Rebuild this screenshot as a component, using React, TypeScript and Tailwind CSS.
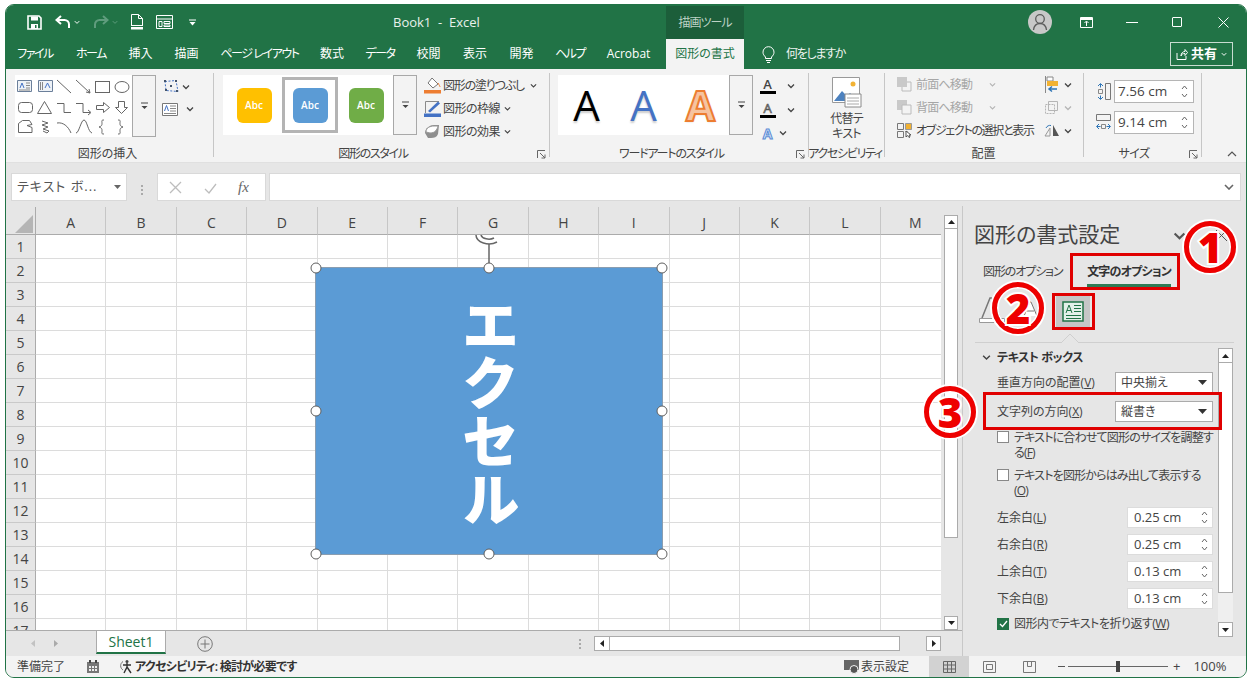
import React from "react";

const Chev = ({ c = "#444", w = 8 }: { c?: string; w?: number }) => (
  <svg width={w} height={w * 0.75} viewBox="0 0 8 6" className="shrink-0"><path d="M1 1.5 4 4.5 7 1.5" fill="none" stroke={c} strokeWidth="1.3" /></svg>
);
const Launcher = () => (
  <svg width="9" height="9" viewBox="0 0 9 9" className="shrink-0"><path d="M.5 8V.5H8M3 3l5 5M8 4.5V8H4.5" fill="none" stroke="#666" /></svg>
);
const MoreBtn = ({ h }: { h: string }) => (
  <div className={`${h} w-[24px] border border-[#a8a8a8] bg-[#f3f3f3] flex items-center justify-center shrink-0`}>
    <svg width="9" height="8" viewBox="0 0 9 8"><path d="M1 1h7" stroke="#444" /><path d="M1.5 4h6L4.5 7z" fill="#444" /></svg>
  </div>
);
const Caret = () => (
  <svg width="9" height="5" viewBox="0 0 9 5" className="shrink-0"><path d="M0 0h9L4.5 5z" fill="#333" /></svg>
);
const Spin = () => (
  <svg width="7" height="15" viewBox="0 0 7 15" className="shrink-0"><path d="M1 5l2.5-3L6 5M1 10l2.5 3L6 10" fill="none" stroke="#666" /></svg>
);

const Group = ({ w, label, labelCls = "", children, right, sep = true }: { w: string; label: string; labelCls?: string; children: React.ReactNode; right?: React.ReactNode; sep?: boolean }) => (
  <div className={`${w} shrink-0 h-full flex flex-col relative`}>
    <div className="flex-1 min-h-0 flex">{children}</div>
    <div className={`h-[18px] shrink-0 flex items-center justify-center text-[12px] text-[#444] leading-none pt-[1px] whitespace-nowrap ${labelCls}`}>{label}</div>
    {right && <div className="absolute right-[4px] bottom-[3px] flex">{right}</div>}
    {sep && <div className="absolute right-0 top-[4px] bottom-[5px] w-px bg-[#c6c6c6]" />}
  </div>
);

const Abc = ({ bg, sel }: { bg: string; sel?: boolean }) => (
  <div className={`w-[56px] h-[56px] shrink-0 flex items-center justify-center ${sel ? "border-[3px] border-[#b4b4b4]" : ""}`}>
    <div className={`${bg} w-[35px] h-[35px] rounded-[6px] flex items-center justify-center text-white text-[10px] font-semibold`}>Abc</div>
  </div>
);

const tabs: [string, string, string][] = [
  ["ファイル", "w-[58px]", "tracking-[-1.5px]"], ["ホーム", "w-[54px]", "tracking-[-1.5px]"], ["挿入", "w-[45px]", ""], ["描画", "w-[47px]", ""], ["ページ レイアウト", "w-[99px]", "tracking-[-1.4px]"],
  ["数式", "w-[46px]", ""], ["データ", "w-[50px]", "tracking-[-1.5px]"], ["校閲", "w-[47px]", ""], ["表示", "w-[46px]", ""], ["開発", "w-[47px]", ""], ["ヘルプ", "w-[50px]", "tracking-[-1.5px]"], ["Acrobat", "w-[67px]", ""],
];
const cols = "ABCDEFGHIJKLM".split("");
const rows = Array.from({ length: 17 }, (_, i) => i + 1);

const MenuRow = ({ icon, text, gray, chevGap = "ml-[4px]", textCls = "" }: { icon: React.ReactNode; text: string; gray?: boolean; chevGap?: string; textCls?: string }) => (
  <div className={`h-[23px] flex items-center text-[12px] whitespace-nowrap ${gray ? "text-[#a6a6a6]" : "text-[#444]"}`}>
    <span className="w-[19px] flex shrink-0">{icon}</span>
    <span className={textCls}>{text}</span>
    <span className={`${chevGap} flex`}><Chev c={gray ? "#b5b5b5" : "#444"} w={7} /></span>
  </div>
);

const Handle = ({ cls }: { cls: string }) => (
  <div className={`absolute ${cls} w-[11px] h-[11px] rounded-full bg-white border-[1.5px] border-[#5f5f5f] -translate-x-1/2 -translate-y-1/2`} />
);

const SelectRow = ({ label, k, val }: { label: string; k: string; val: string }) => (
  <div className="h-[29px] flex items-center pl-[34px] text-[12px] text-[#444]">
    <span className="w-[118px] whitespace-nowrap">{label}(<u>{k}</u>)</span>
    <div className="w-[98px] h-[21px] bg-white border border-[#ababab] flex items-center justify-between pl-[5px] pr-[5px]">
      <span>{val}</span><Caret />
    </div>
  </div>
);
const SpinRow = ({ label, k, val }: { label: string; k: string; val: string }) => (
  <div className="h-[27px] flex items-center pl-[34px] text-[12px] text-[#444]">
    <span className="w-[130px]">{label}(<u>{k}</u>)</span>
    <div className="w-[86px] h-[21px] bg-white border border-[#dcdcdc] flex items-center justify-between pl-[6px] pr-[4px] text-[13px]">
      <span>{val}</span><Spin />
    </div>
  </div>
);

const Circle = ({ n, cls }: { n: string; cls: string }) => (
  <div className={`absolute ${cls} w-[52px] h-[52px] rounded-full border-[5px] border-[#ee0000] shadow-[0_0_0_2px_white,inset_0_0_0_1.5px_white] flex items-center justify-center text-[42px] leading-none font-black text-[#ee0000] [-webkit-text-stroke:4px_white] [paint-order:stroke_fill]`}>{n}</div>
);
const RedBox = ({ cls }: { cls: string }) => <div className={`absolute ${cls} border-[3px] border-[#e00000]`} />;

export default function App() {
  return (
    <div className="relative w-[1252px] h-[684px] bg-white overflow-hidden pl-[5px] pt-[4px] [font-family:'Open_Sans','Noto_Sans_CJK_JP',sans-serif] [font-feature-settings:'palt'] text-[#444]">
      <div className="w-[1242px] h-[674px] rounded-[9px] border border-[#217346] overflow-hidden flex flex-col bg-[#e6e6e6]">
        {/* title bar */}
        <div className="h-[34px] shrink-0 bg-[#217346] flex items-center text-white relative">
          <div className="flex items-center pl-[21px] w-[380px] shrink-0 h-full">
            <svg width="15" height="15" viewBox="0 0 15 15" className="mr-[13px]"><path d="M1 1h11l2 2v11H1z" fill="none" stroke="#fff" strokeWidth="1.6" /><path d="M4 1.5h7v4H4zM4 9h7v5H4z" fill="#fff" /><path d="M8 10h1.5v3H8z" fill="#217346" /></svg>
            <svg width="16" height="14" viewBox="0 0 16 14"><path d="M6 1 1.5 5 6 9M2 5h7.5a4.5 4.5 0 0 1 4.5 4.5V13" fill="none" stroke="#fff" strokeWidth="2" /></svg>
            <span className="ml-[3px] mr-[13px] flex"><Chev c="#fff" w={6} /></span>
            <svg width="16" height="14" viewBox="0 0 16 14"><path d="M10 1l4.5 4L10 9M14 5H6.500A4.500 4.500 0 0 0 2 9.500V13" fill="none" stroke="#5f9c7d" strokeWidth="2" /></svg>
            <span className="ml-[3px] mr-[12px] flex"><Chev c="#5f9c7d" w={6} /></span>
            <svg width="14" height="16" viewBox="0 0 14 16" className="mr-[12px]"><path d="M1.500.5h7l4 4V11M1.500.5V11M8.500.5v4h4" fill="none" stroke="#fff" /><path d="M1 11.500h12" stroke="#fff" /><path d="M1 13h12v2.500H1z" fill="#fff" /></svg>
            <svg width="17" height="14" viewBox="0 0 17 14" className="mr-[16px]"><path d="M.5.500h16v13H.5zM.5 4h16M3 6.500h3v5H3zM8 6.500h6v2H8zM8 10h6v1.500H8z" fill="none" stroke="#fff" /></svg>
            <svg width="7" height="7" viewBox="0 0 7 7"><path d="M0 1h7" stroke="#fff" /><path d="M.5 3h6L3.500 6.500z" fill="#fff" /></svg>
          </div>
          <div className="text-[13px] text-[#e9f1ec] whitespace-pre pl-[7px] w-[280px] shrink-0 pt-[1px]">Book1  -  Excel</div>
          <div className="w-[78px] h-[33px] mt-[1px] bg-[#1c5e3a] flex items-center justify-center text-[12px] tracking-[-1px] text-[#bcd2c5] shrink-0">描画ツール</div>
          <div className="flex-1 flex items-center h-full pl-[284px]">
            <div className="w-[24px] h-[24px] rounded-full bg-[#c8c8c8] flex items-center justify-center mr-[28px]">
              <svg width="16" height="18" viewBox="0 0 16 18"><circle cx="8" cy="6" r="4.300" fill="none" stroke="#5c5c5c" strokeWidth="1.300" /><path d="M1.500 17c.5-4 3-6.500 6.500-6.500s6 2.500 6.500 6.500" fill="none" stroke="#5c5c5c" strokeWidth="1.300" /></svg>
            </div>
            <svg width="13" height="11" viewBox="0 0 13 11" className="mr-[33px]"><path d="M.5.500h12v10H.5z" fill="none" stroke="#fff" /><path d="M.5 2h12" stroke="#fff" strokeWidth="2" /><path d="M6.500 9V4.500M4.500 6l2-2 2 2" fill="none" stroke="#fff" /></svg>
            <div className="w-[12px] h-px bg-white mr-[34px]" />
            <div className="w-[10px] h-[10px] border border-white rounded-[1px] mr-[36px]" />
            <svg width="11" height="11" viewBox="0 0 11 11"><path d="M.5.5l10 10M10.500.5l-10 10" stroke="#fff" /></svg>
          </div>
        </div>
        {/* tabs */}
        <div className="h-[30px] shrink-0 bg-[#217346] flex items-center text-white text-[12px]">
          {tabs.map(([t, w, tr]) => (
            <div key={t} className={`${w} ${tr} text-center whitespace-nowrap`}>{t}</div>
          ))}
          <div className="ml-[4px] w-[78px] h-full bg-[#f3f3f3] text-[#217346] flex items-center justify-center">図形の書式</div>
          <svg width="13" height="17" viewBox="0 0 13 17" className="ml-[18px] mr-[11px]"><path d="M3.500 11C2 9.500 1 8.300 1 6.200A5.500 5.500 0 0 1 12 6.200c0 2.100-1 3.300-2.500 4.800v1.500h-6zM4 14.500h5M5 16.500h3" fill="none" stroke="#fff" /></svg>
          <div className="text-[#eef4f0] w-[59px] whitespace-nowrap tracking-[-1.3px]">何をしますか</div>
          <div className="ml-[325px] w-[63px] h-[24px] border border-[#c9dcd1] flex items-center justify-center gap-[3px] font-bold text-[13px]">
            <svg width="12" height="12" viewBox="0 0 12 12"><path d="M1 5v6.500h9V8M5 8c0-3 2-4.500 4-4.500V1.500l2.500 3L9 7.500V5.500C7 5.500 5.500 6 5 8z" fill="none" stroke="#fff" /></svg>
            共有<span className="ml-[1px]"><Chev c="#fff" w={6} /></span>
          </div>
        </div>
        {/* ribbon */}
        <div className="h-[94px] shrink-0 bg-[#f3f3f3] flex border-b border-[#e0e0e0] relative">
          <Group w="w-[208px]" label="図形の挿入" labelCls="pr-[5px]">
            <div className="flex pl-[9px] pt-[6px]">
              <div className="w-[117px] h-[62px] bg-white">
                <svg width="117" height="62" viewBox="15 75 117 62" fill="none" stroke="#666">
                  <path d="M17.500 80.500h14v11h-14z" stroke="#6b7f9a" fill="#eef2f7" /><path d="M20 88l2-5 2 5" stroke="#4472c4" /><path d="M26 83h4M26 85.500h4M26 88h4M19 90h11" stroke="#888" />
                  <path d="M38.500 80.500h14v11h-14z" stroke="#6b7f9a" fill="#eef2f7" /><path d="M45 88l2.500-5 2.500 5" stroke="#4472c4" /><path d="M40.500 82v8M42.500 82v8" stroke="#888" />
                  <path d="M57 80l14 13" />
                  <path d="M76 80l14 13M90 93l-4-1M90 93l-1-4" />
                  <rect x="95.500" y="81.500" width="14" height="11" />
                  <ellipse cx="122" cy="87" rx="7" ry="5.500" />
                  <rect x="18.500" y="102.500" width="14" height="10" rx="3" />
                  <path d="M44.500 101.500l7 12h-14z" />
                  <path d="M57 103.500h7v9h7" />
                  <path d="M76 103.500h7v9h7M88 110l3 2.500-3 2.500" />
                  <path d="M96.500 105.500h7v-3l6 5-6 5v-3h-7z" />
                  <path d="M118.500 101.500h6v6h3l-6 6-6-6h3z" />
                  <path d="M18.500 132.500v-9l4-3h7l2.500 4-5 1 5 2v5z" />
                  <path d="M42 121l6 2-6 2 6 2-5 2 6 2-2 2-4-2" />
                  <path d="M57 123c6-1 11 3 14 10" />
                  <path d="M76 133c3 0 5-13 8-13s4 12 8 13" />
                  <path d="M104 120c-3 0-2 1-2 3s0 3-3 4c3 1 3 2 3 4s-1 3 2 3" />
                  <path d="M118 120c3 0 2 1 2 3s0 3 3 4c-3 1-3 2-3 4s1 3-2 3" />
                </svg>
              </div>
              <MoreBtn h="h-[62px]" />
              <div className="pl-[6px] flex flex-col">
                <div className="h-[22px] flex items-center gap-[2px] pt-[1px]">
                  <svg width="18" height="15" viewBox="0 0 18 15" fill="none"><path d="M3 2.500l11-1 2 11-12-1z" stroke="#4472c4" strokeDasharray="2 1.500" /><path d="M2 1h2v2H2zM13 1h2v2h-2zM14 11h2v2h-2zM3 10h2v2H3zM8 6h2v2H8z" fill="#44546a" /></svg>
                  <Chev />
                </div>
                <div className="h-[22px] flex items-center gap-[8px] mt-[1px]">
                  <svg width="16" height="13" viewBox="0 0 16 13"><path d="M.5.500h15v12H.5z" fill="#fff" stroke="#777" /><path d="M2.500 8l2-5.500 2 5.500" fill="none" stroke="#4472c4" /><path d="M8 3h6M8 5.500h6M8 8h6M2 10.500h12" stroke="#888" /></svg>
                  <Chev />
                </div>
              </div>
            </div>
          </Group>
          <Group w="w-[336px]" label="図形のスタイル" labelCls="pr-[18px] tracking-[-1.3px]" right={<Launcher />}>
            <div className="flex pl-[9px] pt-[6px]">
              <div className="w-[170px] h-[60px] bg-white flex items-center pl-[3px]">
                <Abc bg="bg-[#ffc000]" />
                <Abc bg="bg-[#5b9bd5]" sel />
                <Abc bg="bg-[#70ad47]" />
              </div>
              <MoreBtn h="h-[60px]" />
              <div className="pl-[7px] -mt-[1px]">
                <MenuRow textCls="tracking-[-1.2px]" chevGap="ml-[6px]" text="図形の塗りつぶし" icon={<svg width="17" height="17" viewBox="0 0 17 17"><path d="M8 1l6 6-5 4-5-5z" fill="#fff" stroke="#777" /><path d="M14 6c1 2 2 3 2 4" stroke="#ed7d31" fill="none" /><path d="M0 13h17v3.500H0z" fill="#ed7d31" /></svg>} />
                <MenuRow textCls="tracking-[-.5px]" text="図形の枠線" icon={<svg width="17" height="17" viewBox="0 0 17 17"><path d="M1.500 13V1.500H15" fill="none" stroke="#8a8a8a" /><path d="M4 11L14 1.500l2 2L6 12.500z" fill="#4472c4" /><path d="M0 13.500h17V17H0z" fill="#4472c4" /></svg>} />
                <MenuRow textCls="tracking-[-.5px]" text="図形の効果" icon={<svg width="17" height="15" viewBox="0 0 17 15"><path d="M1 9c0-5 5-8 9-8h5l-1 9c-1 3-4 4-7 4H4z" fill="#8e8e8e" /><path d="M2 8c0-4 4-6 8-6h4c-1 4-3 7-8 7z" fill="#fff" stroke="#999" /></svg>} />
              </div>
            </div>
          </Group>
          <Group w="w-[259px]" label="ワードアートのスタイル" labelCls="pr-[16px] tracking-[-1.2px]" right={<Launcher />}>
            <div className="flex pl-[8px] pt-[6px]">
              <div className="w-[171px] h-[60px] bg-white flex items-center text-[42px] leading-none">
                <span className="w-[57px] text-center text-black [text-shadow:0_2px_2px_#ccc]">A</span>
                <span className="w-[57px] text-center text-[#4472c4] [text-shadow:0_2px_2px_#ccc]">A</span>
                <span className="w-[57px] text-center font-bold text-[#f6c3a0] [-webkit-text-stroke:2px_#ed7d31] [text-shadow:0_1px_2px_#ccc]">A</span>
              </div>
              <MoreBtn h="h-[60px]" />
              <div className="pl-[6px] -mt-[1px]">
                <div className="h-[24px] flex items-center gap-[11px]">
                  <div className="w-[17px] flex flex-col items-center text-[13px] leading-[13px] font-semibold"><span>A</span><span className="w-[16px] h-[3px] bg-black" /></div><Chev />
                </div>
                <div className="h-[24px] flex items-center gap-[11px]">
                  <div className="w-[17px] flex flex-col items-center text-[13px] leading-[13px] text-white [-webkit-text-stroke:.7px_#555]"><span>A</span><span className="w-[16px] h-[3px] bg-black" /></div><Chev />
                </div>
                <div className="h-[22px] flex items-center gap-[3px]">
                  <span className="w-[17px] text-center text-[14px] font-bold text-[#dbe7f7] [-webkit-text-stroke:1px_#5b8bd5]">A</span><Chev />
                </div>
              </div>
            </div>
          </Group>
          <Group w="w-[76px]" label="アクセシビリティ" labelCls="tracking-[-1.3px] pr-[4px]">
            <div className="w-full flex flex-col items-center pt-[8px] pr-[1px] text-[12px] leading-[15px] tracking-[-.8px]">
              <svg width="30" height="31" viewBox="0 0 30 31" className="mb-[3px]"><path d="M.5.500h27v25H.5z" fill="#fff" stroke="#999" /><circle cx="21" cy="7" r="2.500" fill="#f2b233" /><path d="M2 24l8-10 5 5 3-3 8 8z" fill="#4d82bf" /><path d="M13 17h16v13H13z" fill="#fff" stroke="#8a8a8a" /><path d="M15 21h12M15 24h12M15 27h12" stroke="#aaa" /></svg>
              <span>代替テ</span><span>キスト</span>
            </div>
          </Group>
          <Group w="w-[199px]" label="配置" labelCls="pr-[2px]">
            <div className="flex pl-[12px] pt-[4px]">
              <div className="w-[148px]">
                <MenuRow gray chevGap="ml-[17px]" textCls="tracking-[-.8px]" text="前面へ移動" icon={<svg width="15" height="15" viewBox="0 0 15 15"><path d="M5 5h9v9H5z" fill="none" stroke="#bbb" /><path d="M0 0h10v10H0z" fill="#c9c9c9" /></svg>} />
                <MenuRow gray chevGap="ml-[17px]" textCls="tracking-[-.8px]" text="背面へ移動" icon={<svg width="15" height="15" viewBox="0 0 15 15"><path d="M0 0h10v10H0z" fill="#c9c9c9" /><path d="M5 5h9v9H5z" fill="#f3f3f3" stroke="#bbb" /></svg>} />
                <div className="h-[23px] flex items-center text-[12px] whitespace-nowrap tracking-[-1.3px]">
                  <span className="w-[19px] flex shrink-0"><svg width="16" height="15" viewBox="0 0 16 15" fill="none"><path d="M.5.500h6v6h-6z" stroke="#777" /><path d="M8.500.500h6v6h-6z" fill="#f2b233" stroke="#999" /><path d="M.5 8.500h6v6h-6zM8.500 8.500h2" stroke="#777" /><path d="M9 8v6l1.500-1.500 1.500 2 1-.5-1-2h2z" fill="#fff" stroke="#555" /></svg></span>
                  オブジェクトの選択と表示
                </div>
              </div>
              <div className="-ml-[1px] flex flex-col">
                <div className="h-[23px] flex items-center gap-[5px]"><svg width="15" height="17" viewBox="0 0 15 17"><path d="M1.500 0v17" stroke="#888" /><path d="M3 1h6v4H3z" fill="#fff" stroke="#888" /><path d="M3 5h11v5H3z" fill="#f2b233" /><path d="M13 13H5M8 10.500L5 13l3 2.500" stroke="#2e75b6" strokeWidth="1.500" fill="none" /></svg><Chev /></div>
                <div className="h-[23px] flex items-center gap-[5px]"><svg width="15" height="15" viewBox="0 0 15 15" fill="none" stroke="#b5b5b5"><path d="M4.500 1.500h9v9h-9z" /><path d="M1.500 4.500h9v9h-9z" strokeDasharray="2 1" /></svg><Chev c="#b5b5b5" /></div>
                <div className="h-[23px] flex items-center gap-[5px]"><svg width="15" height="13" viewBox="0 0 15 13"><path d="M1 12L6 4v8z" fill="none" stroke="#999" /><path d="M9 1v11h6z" fill="#555" /><path d="M2 4c1-2 3-3 5-2.500" stroke="#2e75b6" fill="none" /></svg><Chev /></div>
              </div>
            </div>
          </Group>
          <Group w="w-[118px]" label="サイズ" labelCls="pr-[18px] tracking-[-.5px]" right={<Launcher />}>
            <div className="pl-[12px] pt-[11px] flex flex-col gap-[8px]">
              <div className="flex items-center gap-[3px]">
                <svg width="15" height="17" viewBox="0 0 15 17" fill="none"><path d="M4.500 1v3.500M4.500 12.500V16M2 3l2.500-2.500L7 3M2 14l2.500 2.500L7 14" stroke="#2e75b6" /><path d="M2.500 6.500h4v4h-4z" stroke="#888" /><path d="M9.500.500h5v16h-5z" stroke="#777" /></svg>
                <div className="w-[80px] h-[23px] bg-white border border-[#b5b5b5] flex items-center justify-between pl-[3px] pr-[5px] text-[13.500px]"><span>7.56 cm</span><Spin /></div>
              </div>
              <div className="flex items-center gap-[3px]">
                <svg width="15" height="17" viewBox="0 0 15 17" fill="none"><path d="M.5.500h14v6H.5z" stroke="#777" /><path d="M1 12.500h3.500M10.500 12.500H14M3 10L.5 12.500 3 15M12 10l2.500 2.500L12 15" stroke="#2e75b6" /><path d="M5.500 10.500h4v4h-4z" stroke="#888" /></svg>
                <div className="w-[80px] h-[23px] bg-white border border-[#b5b5b5] flex items-center justify-between pl-[3px] pr-[5px] text-[13.500px]"><span>9.14 cm</span><Spin /></div>
              </div>
            </div>
          </Group>
          <div className="flex-1 flex items-end justify-end pr-[9px] pb-[5px]">
            <svg width="10" height="6" viewBox="0 0 10 6"><path d="M1 5l4-4 4 4" fill="none" stroke="#555" strokeWidth="1.200" /></svg>
          </div>
        </div>
        {/* formula bar */}
        <div className="h-[43px] shrink-0 bg-[#e6e6e6] flex pt-[10px] pl-[5px] pr-[5px]">
          <div className="w-[116px] h-[28px] bg-white border border-[#d9d9d9] flex items-center justify-between pl-[5px] pr-[5px] text-[13px] text-[#555] tracking-[1px] whitespace-nowrap">
            <span>テキスト ボ...</span>
            <svg width="7" height="4" viewBox="0 0 7 4"><path d="M0 0h7L3.500 4z" fill="#666" /></svg>
          </div>
          <div className="w-[30px] flex flex-col items-center justify-center gap-[2px]">
            <span className="w-[2px] h-[2px] bg-[#aaa]" /><span className="w-[2px] h-[2px] bg-[#aaa]" /><span className="w-[2px] h-[2px] bg-[#aaa]" />
          </div>
          <div className="w-[109px] h-[28px] bg-white border border-[#d9d9d9] flex items-center pl-[11px]">
            <svg width="13" height="13" viewBox="0 0 13 13" className="mr-[22px]"><path d="M1 1l11 11M12 1L1 12" stroke="#bdbdbd" strokeWidth="1.300" /></svg>
            <svg width="13" height="13" viewBox="0 0 13 13" className="mr-[21px]"><path d="M1 8l4 4 7-9" fill="none" stroke="#bdbdbd" strokeWidth="1.300" /></svg>
            <span className="[font-family:'Liberation_Serif',serif] italic text-[15px] text-[#666]">fx</span>
          </div>
          <div className="ml-[3px] flex-1 h-[28px] bg-white border border-[#d9d9d9] flex items-center justify-end pr-[6px]">
            <svg width="10" height="6" viewBox="0 0 10 6"><path d="M1 1l4 4 4-4" fill="none" stroke="#666" strokeWidth="1.600" /></svg>
          </div>
        </div>
        {/* body */}
        <div className="flex-1 min-h-0 flex">
          <div className="w-[956px] shrink-0 flex flex-col">
            <div className="h-[425px] flex shrink-0 border-b border-[#ababab]">
              <div className="w-[935px] shrink-0 overflow-hidden relative pt-[1px]">
                <div className="grid grid-cols-[30px_repeat(13,70.4px)] grid-rows-[28px_repeat(17,24px)] w-[960px]">
                  <div className="relative border-r border-b border-[#ababab] bg-[#e6e6e6]">
                    <svg width="18" height="18" viewBox="0 0 18 18" className="absolute right-[2px] bottom-[1px]"><path d="M18 0v18H0z" fill="#b5b5b5" /></svg>
                  </div>
                  {cols.map((c) => (
                    <div key={c} className="bg-[#e6e6e6] border-r border-b border-[#ababab] border-r-[#c6c6c6] flex items-center justify-center text-[14px] text-[#444] pt-[4px]">{c}</div>
                  ))}
                  {rows.flatMap((r) => [
                    <div key={`h${r}`} className="bg-[#e6e6e6] border-r border-b border-r-[#ababab] border-b-[#c9c9c9] flex items-center justify-center text-[14px] text-[#444]">{r}</div>,
                    ...cols.map((c) => <div key={c + r} className="bg-white border-r border-b border-[#dcdcdc]" />),
                  ])}
                </div>
                {/* shape */}
                <div className="absolute left-[310px] top-[62px] w-[346px] h-[286px] bg-[#5b9bd5] outline outline-[#8a9db0] flex items-center justify-center">
                  <div className="[writing-mode:vertical-rl] text-[58px] leading-none font-black text-white whitespace-nowrap mr-[3px] mt-[2px]">エクセル</div>
                  <svg width="28" height="33" viewBox="0 0 28 33" className="absolute left-[159px] -top-[33px]" fill="none" stroke="#666" strokeWidth="1.500"><path d="M14 9v24" /><path d="M1 0a13 9 0 0 0 21 7" /><path d="M6 0a8 5 0 0 0 13 3" /></svg>
                  <Handle cls="left-0 top-0" /><Handle cls="left-1/2 top-0" /><Handle cls="left-full top-0" />
                  <Handle cls="left-0 top-1/2" /><Handle cls="left-full top-1/2" />
                  <Handle cls="left-0 top-full" /><Handle cls="left-1/2 top-full" /><Handle cls="left-full top-full" />
                </div>
              </div>
              <div className="w-[21px] shrink-0 bg-[#e6e6e6] flex flex-col pl-[3px] pr-[4px] pt-[9px] pb-[0px]">
                <div className="h-[14px] bg-white border border-[#ababab] flex items-center justify-center"><svg width="7" height="4" viewBox="0 0 7 4"><path d="M0 4h7L3.500 0z" fill="#222" /></svg></div>
                <div className="h-[309px] bg-white border-x border-b border-[#ababab]" />
                <div className="flex-1" />
                <div className="h-[14px] bg-white border border-[#ababab] flex items-center justify-center"><svg width="7" height="4" viewBox="0 0 7 4"><path d="M0 0h7L3.500 4z" fill="#222" /></svg></div>
              </div>
            </div>
            <div className="flex-1 flex items-start">
              <div className="w-[90px] h-[25px] flex items-center pl-[25px] gap-[19px]">
                <svg width="4" height="7" viewBox="0 0 4 7"><path d="M4 0v7L0 3.500z" fill="#c2c2c2" /></svg>
                <svg width="4" height="7" viewBox="0 0 4 7"><path d="M0 0v7l4-3.500z" fill="#aaa" /></svg>
              </div>
              <div className="w-[70px] h-[23px] bg-white border-x border-b-2 border-[#ababab] border-b-[#217346] flex items-center justify-center text-[14px] text-[#217346]">Sheet1</div>
              <div className="h-[25px] flex items-center ml-[31px]">
                <svg width="16" height="16" viewBox="0 0 16 16"><circle cx="8" cy="8" r="7.300" fill="none" stroke="#777" /><path d="M8 3.500v9M3.500 8h9" stroke="#777" /></svg>
              </div>
              <div className="h-[25px] flex items-center ml-[366px] flex-col justify-center gap-[2px]">
                <span className="w-[2px] h-[2px] bg-[#aaa]" /><span className="w-[2px] h-[2px] bg-[#aaa]" /><span className="w-[2px] h-[2px] bg-[#aaa]" />
              </div>
              <div className="ml-[13px] mt-[5px] w-[347px] h-[15px] flex">
                <div className="w-[16px] h-full bg-white border border-[#ababab] flex items-center justify-center"><svg width="4" height="7" viewBox="0 0 4 7"><path d="M4 0v7L0 3.500z" fill="#222" /></svg></div>
                <div className="w-[290px] h-full bg-white border-y border-r border-[#ababab]" />
                <div className="flex-1" />
                <div className="w-[15px] h-full bg-white border border-[#ababab] flex items-center justify-center"><svg width="4" height="7" viewBox="0 0 4 7"><path d="M0 0v7l4-3.500z" fill="#222" /></svg></div>
              </div>
            </div>
          </div>
          {/* format panel */}
          <div className="flex-1 min-w-0 bg-[#e6e6e6] border-l border-[#c8c8c8] flex flex-col">
            <div className="h-[56px] shrink-0 flex items-center pl-[11px] text-[21px] text-[#444] pt-[2px]">
              図形の書式設定
              <span className="ml-[53px] mt-[1px]"><Chev c="#555" w={13} /></span>
              <svg width="13" height="13" viewBox="0 0 13 13" className="ml-[29px]"><path d="M1 1l11 11M12 1L1 12" stroke="#555" /></svg>
            </div>
            <div className="h-[30px] flex shrink-0">
              <div className="w-[104px] pl-[20px] pt-[1px] text-[12px] tracking-[-1.1px] whitespace-nowrap">図形のオプション</div>
              <div className="w-[84px] h-[25px] border-b-[3px] border-[#2f7b55] font-bold text-center text-[#333] whitespace-nowrap pt-[1px] text-[12px] tracking-[-.8px] ml-[20px] -mr-[20px]">文字のオプション</div>
            </div>
            <div className="h-[50px] flex items-start pl-[16px] pt-[4px] shrink-0">
              <svg width="26" height="28" viewBox="0 0 26 28"><path d="M3 22L11 2h2l8 20" fill="none" stroke="#777" strokeWidth="1.500" /><path d="M.5 22.500h25v4H.5z" fill="#fff" stroke="#999" /></svg>
              <svg width="15" height="16" viewBox="0 0 15 16" className="ml-[18px] mt-[5px]"><path d="M1 15L7 1h1l6 14M4 10h7" fill="#fff" stroke="#777" /></svg>
              <div className="ml-[18px] w-[34px] h-[31px] bg-[#c6c6c6] flex items-center justify-center">
                <svg width="22" height="21" viewBox="0 0 22 21"><path d="M1 1h20v19H1z" fill="#e3f0e8" stroke="#217346" strokeWidth="1.500" /><path d="M4 12l3-8 3 8M5 9.500h4" fill="none" stroke="#217346" /><path d="M12 4.500h7M12 7.500h7M12 10.500h7M4 14.500h15M4 17.500h15" stroke="#217346" /></svg>
              </div>
            </div>
            <div className="h-[4px] mx-[12px] border-t border-[#cfcfcf] relative shrink-0">
              <svg width="18" height="9" viewBox="0 0 18 9" className="absolute left-[86px] -top-[9px]"><path d="M0 9l9-9 9 9" fill="#e6e6e6" stroke="#cfcfcf" /></svg>
            </div>
            <div className="flex-1 min-h-0 flex">
              <div className="w-[255px] shrink-0 pt-[1px]">
                <div className="h-[21px] flex items-center pl-[19px] gap-[6px] text-[12px] font-bold text-[#333] tracking-[-.4px]"><Chev w={9} />テキスト ボックス</div>
                <SelectRow label="垂直方向の配置" k="V" val="中央揃え" />
                <SelectRow label="文字列の方向" k="X" val="縦書き" />
                <div className="flex pl-[34px] gap-[5px] text-[12px] leading-[15px] mt-[4px]">
                  <span className="w-[12px] h-[12px] bg-white border border-[#888] mt-[1px] shrink-0" />
                  <span className="whitespace-nowrap tracking-[-.8px]">テキストに合わせて図形のサイズを調整す<br />る(<u>F</u>)</span>
                </div>
                <div className="flex pl-[34px] gap-[5px] text-[12px] leading-[15px] mt-[8px]">
                  <span className="w-[12px] h-[12px] bg-white border border-[#888] mt-[1px] shrink-0" />
                  <span className="whitespace-nowrap tracking-[-.8px]">テキストを図形からはみ出して表示する<br />(<u>O</u>)</span>
                </div>
                <div className="mt-[6px]">
                  <SpinRow label="左余白" k="L" val="0.25 cm" />
                  <SpinRow label="右余白" k="R" val="0.25 cm" />
                  <SpinRow label="上余白" k="T" val="0.13 cm" />
                  <SpinRow label="下余白" k="B" val="0.13 cm" />
                </div>
                <div className="flex items-center pl-[34px] gap-[5px] text-[12px] h-[23px] tracking-[-.5px]">
                  <span className="w-[12px] h-[12px] bg-[#217346] flex items-center justify-center shrink-0"><svg width="9" height="8" viewBox="0 0 9 8"><path d="M1 4l2.500 2.500L8 1" fill="none" stroke="#fff" strokeWidth="1.300" /></svg></span>
                  <span>図形内でテキストを折り返す(<u>W</u>)</span>
                </div>
              </div>
              <div className="w-[15px] h-[289px] mt-[2px] shrink-0 flex flex-col">
                <div className="h-[15px] bg-white border border-[#ababab] flex items-center justify-center"><svg width="7" height="4" viewBox="0 0 7 4"><path d="M0 4h7L3.500 0z" fill="#222" /></svg></div>
                <div className="h-[230px] bg-white border-x border-b border-[#ababab]" />
                <div className="flex-1 bg-[#efefef]" />
                <div className="h-[15px] bg-white border border-[#ababab] flex items-center justify-center"><svg width="7" height="4" viewBox="0 0 7 4"><path d="M0 0h7L3.500 4z" fill="#222" /></svg></div>
              </div>
            </div>
          </div>
        </div>
        {/* status bar */}
        <div className="h-[21px] shrink-0 bg-[#f3f3f3] flex items-center text-[12px] text-[#444] whitespace-nowrap">
          <span className="ml-[11px] w-[70px]">準備完了</span>
          <svg width="12" height="13" viewBox="0 0 12 13"><path d="M0 2h12v11H0z" fill="#777" /><path d="M2 0h2v3H2zM8 0h2v3H8z" fill="#444" /><path d="M2 6h2v2H2zM5 6h2v2H5zM8 6h2v2H8zM2 9h2v2H2zM5 9h2v2H5zM8 9h2v2H8z" fill="#eee" /></svg>
          <svg width="16" height="15" viewBox="0 0 16 15" className="ml-[19px] mr-[1px]" fill="none"><path d="M5 2.500A5 5 0 0 0 5 11" stroke="#777" /><circle cx="9" cy="2.500" r="1.500" fill="#444" /><path d="M5 6h8M9 4v4l-3 6M9 8l4 6" stroke="#333" strokeWidth="1.400" /></svg>
          <span className="font-semibold text-[#333] w-[709px] tracking-[-.7px]">アクセシビリティ: 検討が必要です</span>
          <svg width="16" height="14" viewBox="0 0 16 14" className="mr-[1px]"><path d="M0 0h15v10H0z" fill="#666" /><circle cx="10" cy="9.500" r="4" fill="#555" stroke="#f3f3f3" /></svg>
          <span className="w-[48px] shrink-0">表示設定</span>
          <span className="w-[20px] shrink-0" />
          <div className="h-full w-[40px] bg-[#d2d2d2] flex items-center justify-center shrink-0">
            <svg width="13" height="12" viewBox="0 0 13 12" fill="none" stroke="#666"><path d="M.5.500h12v11H.5zM.5 4h12M.5 8h12M4.500.500v11M8.500.500v11" /></svg>
          </div>
          <div className="w-[40px] flex justify-center shrink-0"><svg width="13" height="12" viewBox="0 0 13 12" fill="none" stroke="#777"><path d="M.5.500h12v11H.5zM3.500 3.500h6v5h-6z" /></svg></div>
          <div className="w-[40px] flex justify-center shrink-0"><svg width="13" height="12" viewBox="0 0 13 12" fill="none" stroke="#777"><path d="M.5.500h12v11H.5zM4.500.500v5h4v-5" /></svg></div>
          <div className="ml-[9px] w-[7px] h-px bg-[#555]" />
          <div className="ml-[3px] w-[100px] h-px bg-[#666] relative"><div className="absolute left-[48px] -top-[5px] w-[4px] h-[11px] bg-[#444]" /></div>
          <span className="ml-[5px] text-[13px]">+</span>
          <span className="ml-[13px] text-[13px]">100%</span>
        </div>
      </div>
      {/* annotations */}
      <RedBox cls="left-[1070px] top-[253px] w-[110px] h-[37px]" />
      <RedBox cls="left-[1052px] top-[293px] w-[43px] h-[37px]" />
      <RedBox cls="left-[983px] top-[392px] w-[239px] h-[38px]" />
      <Circle n="1" cls="left-[1184px] top-[221px]" />
      <Circle n="2" cls="left-[992px] top-[282px]" />
      <Circle n="3" cls="left-[924px] top-[386px]" />
    </div>
  );
}
